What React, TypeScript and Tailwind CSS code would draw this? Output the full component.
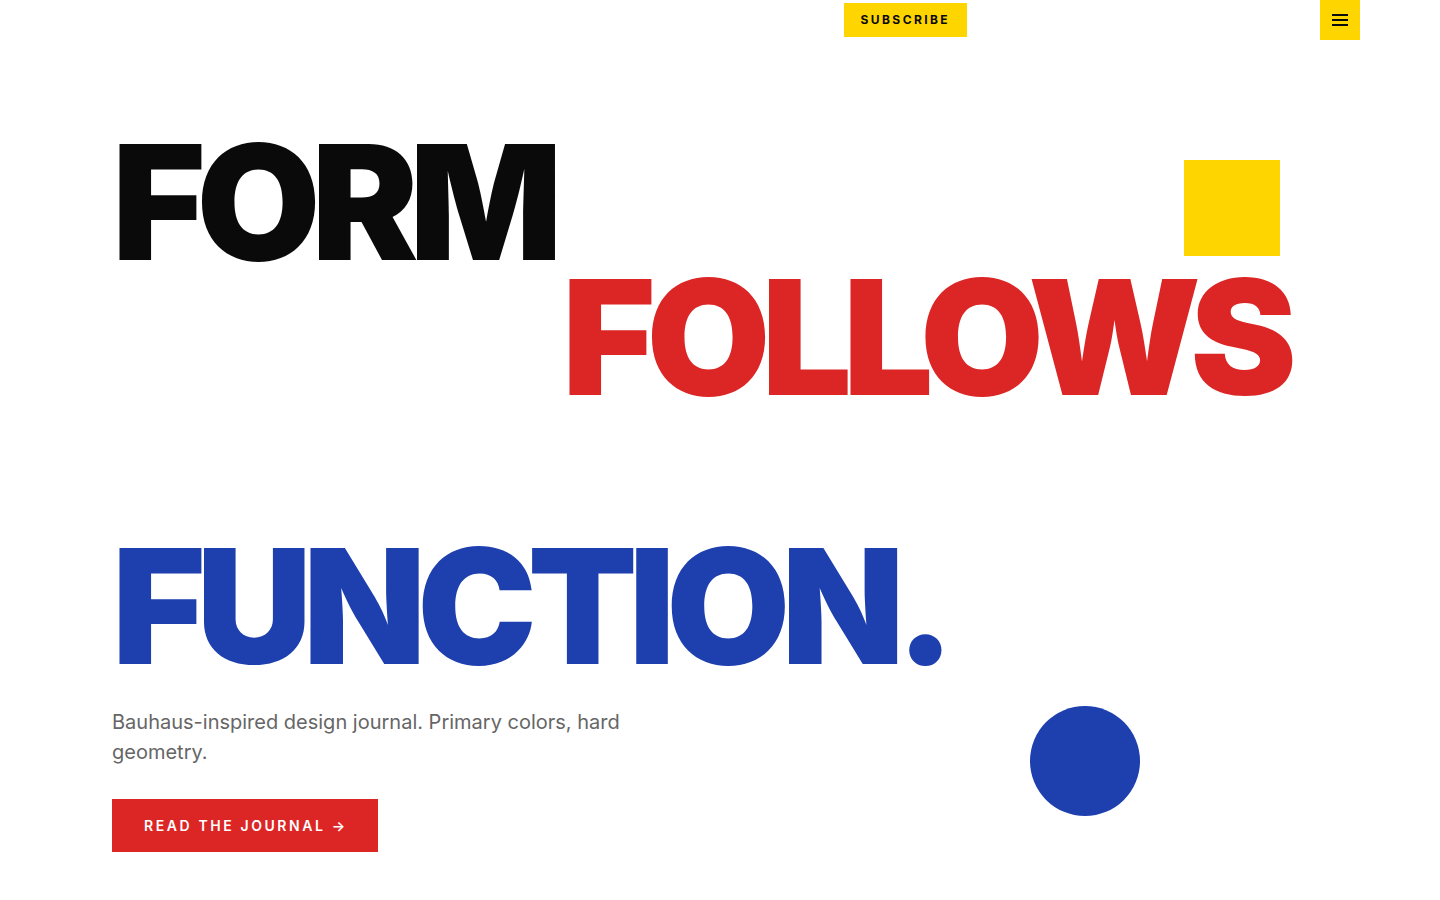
import React from 'react';

const font = { fontFamily: 'Inter, "Noto Sans", sans-serif' };

export default function App() {
  return (
    <div className="relative min-h-[900px] w-full overflow-hidden bg-white" style={font}>
      {/* Header */}
      <header className="flex items-start justify-end gap-[353px] pr-20">
        <button className="mt-[3px] h-[34px] bg-[#ffd500] px-[17px] text-xs font-bold tracking-[0.2em] text-[#0a0a0a]">
          SUBSCRIBE
        </button>
        <button className="flex h-10 w-10 flex-col items-center justify-center gap-[3px] bg-[#ffd500]">
          <span className="block h-[2px] w-4 bg-[#0a0a0a]" />
          <span className="block h-[2px] w-4 bg-[#0a0a0a]" />
          <span className="block h-[2px] w-4 bg-[#0a0a0a]" />
        </button>
      </header>

      {/* Decorations */}
      <div className="absolute left-[1184px] top-[160px] h-24 w-24 bg-[#ffd500]" />
      <div className="absolute left-[1030px] top-[706px] h-[110px] w-[110px] rounded-full bg-[#1e40af]" />

      {/* Hero */}
      <main className="pl-28 pt-[95px]">
        <h1 className="text-[160px] font-black leading-[135px] tracking-[-0.056em]">
          <span className="block text-[#0a0a0a]">FORM</span>
          <span className="block pl-[450px] text-[#dc2626]">FOLLOWS</span>
          <span className="mt-[134px] block text-[#1e40af]">FUNCTION.</span>
        </h1>
        <p className="mt-[33px] max-w-[540px] text-xl leading-[30px] text-[#666666]">
          Bauhaus-inspired design journal. Primary colors, hard geometry.
        </p>
        <button className="mt-8 flex h-[53px] items-center bg-[#dc2626] pl-8 pr-[30px] text-sm font-semibold tracking-[0.185em] text-white">
          READ THE JOURNAL →
        </button>
      </main>
    </div>
  );
}
